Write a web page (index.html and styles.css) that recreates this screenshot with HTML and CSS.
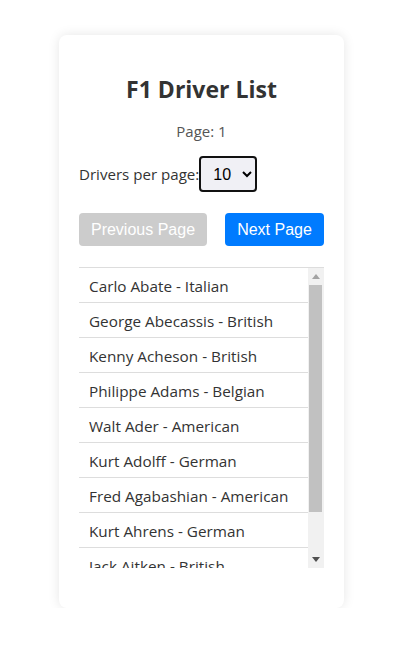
FILE: index.html
```html
<!DOCTYPE html>
<html>
<head>
<meta charset="utf-8">
<link rel="stylesheet" href="styles.css">
</head>
<body>
<div class="card">
  <h2 class="title">F1 Driver List</h2>
  <p class="page-num">Page: 1</p>
  <div class="per-page">
    <label for="pp">Drivers per page:</label>
    <select id="pp" class="select">
      <option>10</option>
      <option>20</option>
    </select>
  </div>
  <div class="buttons">
    <button class="btn btn-disabled">Previous Page</button>
    <button class="btn btn-primary">Next Page</button>
  </div>
  <div class="list-wrap">
    <ul class="list">
      <li>Carlo Abate - Italian</li>
      <li>George Abecassis - British</li>
      <li>Kenny Acheson - British</li>
      <li>Philippe Adams - Belgian</li>
      <li>Walt Ader - American</li>
      <li>Kurt Adolff - German</li>
      <li>Fred Agabashian - American</li>
      <li>Kurt Ahrens - German</li>
      <li>Jack Aitken - British</li>
      <li>Christijan Albers - Dutch</li>
    </ul>
    <div class="scrollbar" aria-hidden="true">
      <div class="sb-btn">
        <svg width="8" height="5" viewBox="0 0 8 5"><polygon points="0,5 8,5 4,0" fill="#a3a3a3"/></svg>
      </div>
      <div class="sb-track">
        <div class="sb-thumb"></div>
      </div>
      <div class="sb-btn">
        <svg width="8" height="5" viewBox="0 0 8 5"><polygon points="0,0 8,0 4,5" fill="#505050"/></svg>
      </div>
    </div>
  </div>
</div>
</body>
</html>
```
FILE: styles.css
```css
html, body {
  margin: 0;
  padding: 0;
  background: #fff;
}
body {
  font-family: "Open Sans", "Noto Sans", sans-serif;
  color: #333;
  padding-top: 35px;
}
.card {
  width: 245px;
  margin-left: 59px;
  padding: 20px;
  background: #fff;
  border-radius: 8px;
  box-shadow: 0 0 12px rgba(0, 0, 0, 0.1);
}
.title {
  margin: 19px 0 0;
  font-size: 23px;
  line-height: 30px;
  font-weight: 700;
  text-align: center;
  color: #333;
}
.page-num {
  margin: 17px 0 0;
  font-size: 15px;
  line-height: 20px;
  text-align: center;
  color: #555;
}
.per-page {
  display: flex;
  align-items: center;
  margin-top: 15px;
  font-size: 15.1px;
  color: #333;
}
.select {
  width: 58px;
  height: 36px;
  margin-left: 0;
  border: 2px solid #111;
  border-radius: 4px;
  background: #f0f0f5;
  font-family: "Liberation Sans", Arial, sans-serif;
  font-size: 16px;
  color: #000;
  padding: 0 0 0 8px;
}
.buttons {
  display: flex;
  justify-content: space-between;
  margin-top: 21px;
}
.btn {
  border: none;
  border-radius: 4px;
  color: #fff;
  font-family: "Liberation Sans", Arial, sans-serif;
  font-size: 16px;
  line-height: 19px;
  padding: 7px 11px;
  height: 33px;
}
.btn-disabled {
  background: #cccccc;
  width: 128px;
}
.btn-primary {
  background: #007bff;
  width: 99px;
}
.list-wrap {
  display: flex;
  margin: 21px 0 20px;
  height: 300px;
  border-top: 1px solid #ddd;
}
.list {
  flex: 1;
  list-style: none;
  margin: 0;
  padding: 0;
  overflow: hidden;
}
.list li {
  padding: 9px 10px 7px;
  font-size: 15.3px;
  line-height: 18px;
  border-bottom: 1px solid #ddd;
  color: #333;
  white-space: nowrap;
}
.scrollbar {
  width: 16px;
  display: flex;
  flex-direction: column;
  background: #f1f1f1;
}
.sb-btn {
  height: 17px;
  display: flex;
  align-items: center;
  justify-content: center;
}
.sb-track {
  flex: 1;
  padding: 0 2px 0 1px;
}
.sb-thumb {
  height: 227px;
  background: #c1c1c1;
}
```
